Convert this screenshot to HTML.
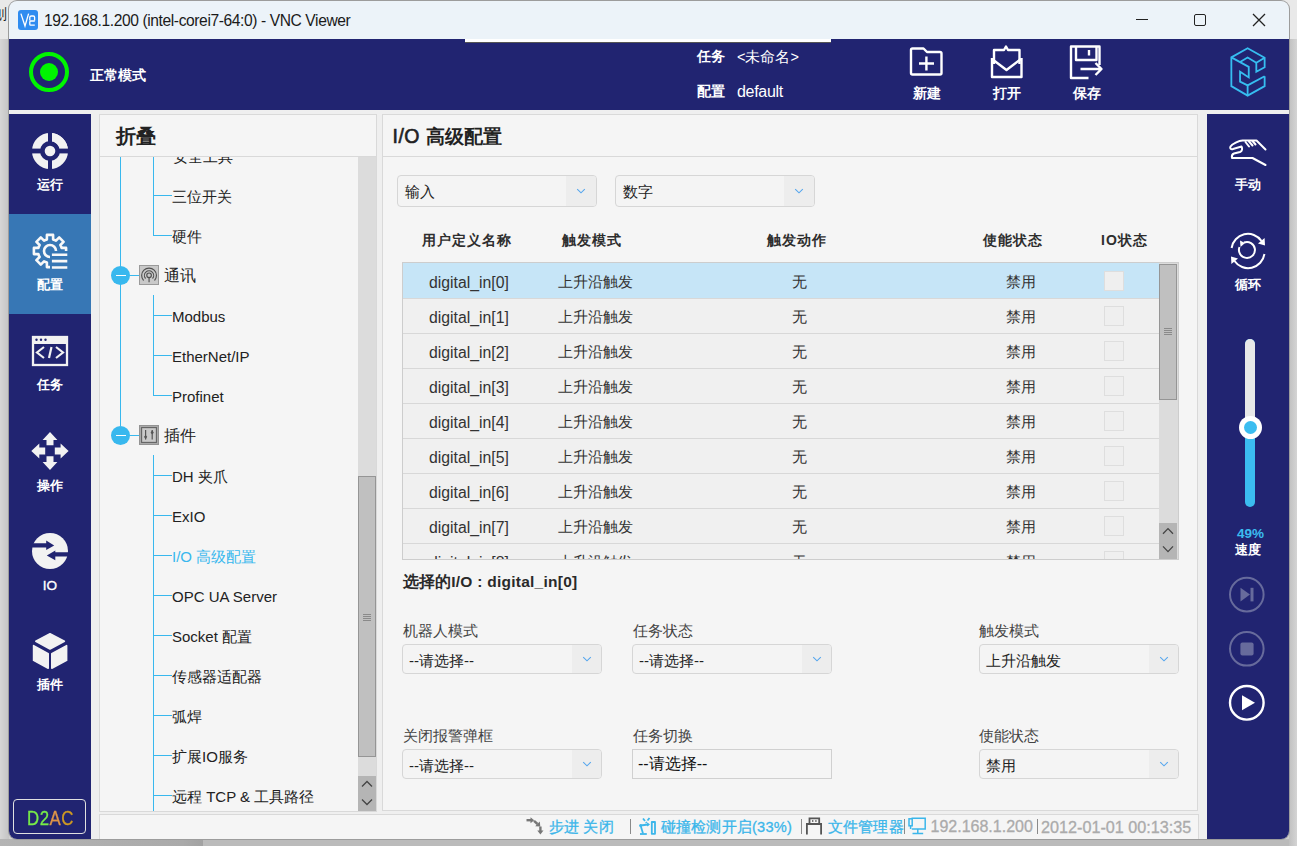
<!DOCTYPE html>
<html><head><meta charset="utf-8">
<style>
*{box-sizing:border-box}
html,body{margin:0;padding:0}
body{width:1297px;height:846px;overflow:hidden;position:relative;background:#cfcfcf;font-family:"Liberation Sans",sans-serif;color:#222}
.a{position:absolute}
.t{position:absolute;white-space:nowrap;line-height:1}
.navy{background:#212471}
.w{color:#fff}
.b{font-weight:bold}
</style></head><body>
<!-- desktop -->
<div class="a" style="left:0;top:0;width:1297px;height:39px;background:#e9e9e9"></div>
<div class="a" style="left:0;top:39px;width:9px;height:807px;background:linear-gradient(90deg,#d6d6d6,#c4c4c4)"></div>
<div class="a" style="left:0;top:839px;width:1297px;height:7px;background:#bbbbbb"></div>
<div class="a" style="left:0;top:839px;width:203px;height:7px;background:linear-gradient(90deg,#b4b4b4,#aaaaaa 90%,#a2a2a2)"></div>
<div class="a" style="left:1289px;top:39px;width:8px;height:807px;background:linear-gradient(90deg,#c0c0c0,#d4d4d4)"></div>
<div class="t" style="left:-8px;top:6px;font-size:15px;color:#222">刨</div>

<!-- window frame -->
<div class="a" style="left:8px;top:0px;width:1282px;height:840px;border-radius:9px;background:#9c9c9c"></div>
<!-- title bar -->
<div class="a" style="left:9px;top:1px;width:1280px;height:38px;background:#ecf3f9;border-radius:8px 8px 0 0"></div>
<svg class="a" style="left:18px;top:10px" width="20" height="20" viewBox="0 0 20 20"><rect x="0" y="0" width="20" height="20" rx="3" fill="#2f8cf0"/><g fill="none" stroke="#fff" stroke-width="1.3"><path d="M2.9 3.6 L7 16 L10.6 3.6"/><path d="M11.8 10.4 V7.2 Q11.8 6 13.3 6 H15.3 Q16.6 6 16.6 7.2 V10.4"/><path d="M16.8 11 H12.6 Q11.8 11 11.8 12 V14.2 Q11.8 15.1 12.6 15.1 H16.8"/></g></svg>
<div class="t" style="left:44px;top:12.5px;font-size:15.6px;letter-spacing:-0.4px;color:#1a1a1a">192.168.1.200 (intel-corei7-64:0) - VNC Viewer</div>
<div class="a" style="left:1136px;top:19px;width:12px;height:1px;background:#222"></div>
<div class="a" style="left:1194px;top:14px;width:12px;height:12px;border:1.2px solid #222;border-radius:2px"></div>
<svg class="a" style="left:1252px;top:13px" width="14" height="14" viewBox="0 0 14 14"><path d="M1 1L13 13M13 1L1 13" stroke="#222" stroke-width="1.3"/></svg>

<!-- main bg -->
<div class="a" style="left:9px;top:39px;width:1280px;height:800px;background:#efefef;border-radius:0 0 8px 8px"></div>
<!-- header -->
<div class="a navy" style="left:9px;top:39px;width:1280px;height:71px"></div>
<div class="a" style="left:465px;top:39px;width:366px;height:3px;background:#fff"></div>
<div class="a" style="left:465px;top:42px;width:366px;height:1px;background:#555"></div>
<div class="a" style="left:29px;top:52px;width:40px;height:40px;border:4px solid #00f500;border-radius:50%"></div>
<div class="a" style="left:40px;top:63px;width:18px;height:18px;background:#00f500;border-radius:50%"></div>
<div class="t w b" style="left:90px;top:68px;font-size:14px">正常模式</div>
<div class="t w b" style="left:697px;top:49px;font-size:14px">任务</div>
<div class="t w" style="left:737px;top:50px;font-size:14.5px">&lt;未命名&gt;</div>
<div class="t w b" style="left:697px;top:84px;font-size:14px">配置</div>
<div class="t w" style="left:737px;top:84px;font-size:16px;letter-spacing:-0.3px">default</div>

<!-- header icons -->
<svg class="a" style="left:900px;top:40px" width="210" height="65" viewBox="0 0 210 65">
 <g fill="none" stroke="#fff" stroke-width="2.4" stroke-linejoin="round">
  <path d="M12.5 8.5 H23.5 L27 12 H40 Q41.5 12 41.5 13.5 V33 Q41.5 34.5 40 34.5 H12.5 Q11 34.5 11 33 V10 Q11 8.5 12.5 8.5 Z"/>
  <path d="M26.4 16.5 V30.5 M19 23.5 H34"/>
  <path d="M92 18 V37 H121.5 V18"/>
  <path d="M92 19 L106.5 30 L121 19"/>
  <path d="M94 24 V10 L104 10 L106 6.5 L108 10 H119.5 V24"/>
  <path d="M102 50 Z"/>
  <path d="M1100 0"/>
  <path d="M188.5 38 H171 V6.5 H199.5 V25"/>
  <path d="M176 6.5 V20 H196.5 V6.5"/>
  <path d="M189 10 V15.5"/>
  <path d="M180.5 29 H201 M195.5 23 L201.5 29 L195.5 35"/>
 </g>
</svg>
<div class="t w b" style="left:912.5px;top:87px;font-size:13.5px">新建</div>
<div class="t w b" style="left:992.5px;top:87px;font-size:13.5px">打开</div>
<div class="t w b" style="left:1072.5px;top:87px;font-size:13.5px">保存</div>
<!-- logo -->
<svg class="a" style="left:1220px;top:40px" width="60" height="64" viewBox="0 0 793 846">
 <g fill="none" stroke="#36bdf0" stroke-width="24" stroke-linejoin="miter">
  <path d="M590,480 L590,610 L365,735 L150,610 L150,230 L365,110 L590,235 L590,360 L480,420 L480,300 L590,235"/>
  <path d="M150,230 L380,355 L380,495 L265,420 L265,550 L365,600 L590,480"/>
  <path d="M265,290 L365,232 L480,300"/>
  <path d="M365,600 L365,735"/>
 </g>
</svg>

<!-- left nav -->
<div class="a navy" style="left:9px;top:114px;width:82px;height:725px;border-radius:0 0 0 8px"></div>
<div class="a" style="left:9px;top:214px;width:82px;height:100px;background:#3777b5"></div>
<!-- 运行 -->
<svg class="a" style="left:30px;top:131px" width="40" height="40" viewBox="0 0 40 40">
 <g fill="#f2f2f2">
  <path d="M20 2 A18 18 0 0 1 38 20 L30 20 A10 10 0 0 0 20 10 Z" />
 </g>
 <circle cx="20" cy="20" r="14" fill="none" stroke="#f2f2f2" stroke-width="8"/>
 <rect x="18" y="0" width="4" height="40" fill="#212471"/>
 <rect x="0" y="17.6" width="40" height="4.8" fill="#212471"/>
 <circle cx="20" cy="20" r="5.3" fill="#f2f2f2"/>
</svg>
<div class="t w b" style="left:36.8px;top:178.0px;font-size:13.4px">运行</div>
<!-- 配置 gear -->
<svg class="a" style="left:30px;top:231px" width="40" height="40" viewBox="0 0 40 40">
 <defs><mask id="gm"><rect x="0" y="0" width="40" height="40" fill="#fff"/><rect x="20" y="20" width="20" height="20" fill="#000"/></mask></defs>
 <g fill="none" stroke="#f8f8f8" stroke-width="2.6" stroke-linejoin="round">
  <path mask="url(#gm)" d="M16.90 8.41 L16.90 3.90 L23.10 3.90 L23.10 8.41 A12.0 12.0 0 0 1 26.01 9.61 L29.19 6.42 L33.58 10.81 L30.39 13.99 A12.0 12.0 0 0 1 31.59 16.90 L36.10 16.90 L36.10 23.10 L31.59 23.10 A12.0 12.0 0 0 1 30.39 26.01 L33.58 29.19 L29.19 33.58 L26.01 30.39 A12.0 12.0 0 0 1 23.10 31.59 L23.10 36.10 L16.90 36.10 L16.90 31.59 A12.0 12.0 0 0 1 13.99 30.39 L10.81 33.58 L6.42 29.19 L9.61 26.01 A12.0 12.0 0 0 1 8.41 23.10 L3.90 23.10 L3.90 16.90 L8.41 16.90 A12.0 12.0 0 0 1 9.61 13.99 L6.42 10.81 L10.81 6.42 L13.99 9.61 A12.0 12.0 0 0 1 16.90 8.41 Z"/>
  <path d="M26 20 A6 6 0 1 0 20 26"/>
  <path d="M21.9 23.7 H37.3 M21.9 30.1 H37.3 M21.9 36.5 H37.3" stroke-linecap="butt"/>
 </g>
</svg>
<div class="t w b" style="left:36.8px;top:278.0px;font-size:13.4px">配置</div>
<!-- 任务 -->
<svg class="a" style="left:30px;top:334px" width="40" height="34" viewBox="0 0 40 34">
 <rect x="3" y="3" width="34" height="28" fill="none" stroke="#f2f2f2" stroke-width="2.3"/>
 <rect x="3" y="2" width="34" height="8" fill="#f2f2f2"/>
 <circle cx="6.5" cy="5.8" r="1.2" fill="#212471"/><circle cx="11" cy="5.8" r="1.2" fill="#212471"/><circle cx="15.5" cy="5.8" r="1.2" fill="#212471"/>
 <g fill="none" stroke="#f2f2f2" stroke-width="2.2">
  <path d="M14 13 L7 18.5 L14 24"/>
  <path d="M26 13 L33 18.5 L26 24"/>
  <path d="M21.5 13 L19 24"/>
 </g>
</svg>
<div class="t w b" style="left:36.8px;top:378.0px;font-size:13.4px">任务</div>
<!-- 操作 move -->
<svg class="a" style="left:30px;top:431px" width="40" height="40" viewBox="0 0 40 40">
 <g fill="#f2f2f2">
  <path d="M20 1 L27.4 9 H23.5 V14.3 H16.5 V9 H12.6 Z"/>
  <path d="M20 39 L27.4 31 H23.5 V25.2 H16.5 V31 H12.6 Z"/>
  <path d="M1.3 20 L9.3 12.6 V16.5 H15.2 V23.5 H9.3 V27.4 Z"/>
  <path d="M38.6 20 L30.6 12.6 V16.5 H24.8 V23.5 H30.6 V27.4 Z"/>
 </g>
</svg>
<div class="t w b" style="left:36.8px;top:479.0px;font-size:13.4px">操作</div>
<!-- IO -->
<svg class="a" style="left:30px;top:531px" width="40" height="40" viewBox="0 0 40 40">
 <circle cx="20" cy="20" r="18" fill="#f2f2f2"/>
 <g fill="#212471">
  <path d="M0 12.2 H16.2 V9.5 L24.2 14.5 L16.2 19.1 V16.4 H0 Z"/>
  <path d="M40 21.2 H25.3 V19.6 L16.8 24.4 L25.3 29.2 V25.5 H40 Z"/>
 </g>
</svg>
<div class="t w" style="left:42.8px;top:579px;font-size:13.6px;-webkit-text-stroke:0.35px #fff">IO</div>
<!-- 插件 cube -->
<svg class="a" style="left:30px;top:631px" width="40" height="40" viewBox="0 0 40 40">
 <g fill="#f2f2f2" stroke="#f2f2f2" stroke-width="1.6" stroke-linejoin="round">
  <path d="M20 2.8 L34.4 10.2 L20 18 L5.8 10.2 Z"/>
  <path d="M3.6 14.6 L18.2 22.8 L18.2 37.2 L3.6 29.4 Z"/>
  <path d="M21.8 22.8 L36.6 14.6 L36.6 29.4 L21.8 37.2 Z"/>
 </g>
</svg>
<div class="t w b" style="left:36.8px;top:678.0px;font-size:13.4px">插件</div>
<!-- D2AC -->
<div class="a" style="left:13px;top:799px;width:73px;height:35px;border:1.5px solid #e0e0e0;border-radius:4px"></div>
<div class="t" style="left:27px;top:808px;font-size:20px;letter-spacing:0.6px;transform:scaleX(0.84);transform-origin:0 0;-webkit-text-stroke:0.3px currentColor"><span style="color:#78ec48">D2</span><span style="color:#de9448">A</span><span style="color:#cf9a22">C</span></div>


<!-- tree panel -->
<div class="a" style="left:99px;top:114px;width:278px;height:698px;background:#f5f5f5;border:1px solid #d9d9d9"></div>
<div class="a" style="left:100px;top:156px;width:276px;height:1px;background:#d9d9d9"></div>
<div class="t b" style="left:116px;top:126px;font-size:20px;color:#222">折叠</div>
<div class="a" style="left:100px;top:157px;width:258px;height:654px;overflow:hidden">
 <div class="a" style="left:20px;top:0;width:1.2px;height:269px;background:#38b8ee"></div>
 <div class="a" style="left:53px;top:0;width:1px;height:79px;background:#38b8ee"></div>
 <div class="t" style="left:73px;top:-8px;font-size:15px">安全工具</div>
 <div class="a" style="left:53px;top:38px;width:19px;height:1px;background:#38b8ee"></div>
 <div class="t" style="left:72px;top:32px;font-size:15px;color:#222">三位开关</div>
 <div class="a" style="left:53px;top:78px;width:19px;height:1px;background:#38b8ee"></div>
 <div class="t" style="left:72px;top:72px;font-size:15px;color:#222">硬件</div>
 <div class="a" style="left:11px;top:109px;width:19px;height:19px;border-radius:50%;background:#38b8ee"></div>
 <div class="a" style="left:15.5px;top:117.5px;width:10px;height:1.5px;background:#fff"></div>
 <div class="a" style="left:30px;top:118px;width:9px;height:1px;background:#38b8ee"></div>
 <div class="a" style="left:39px;top:108px;width:20px;height:20px;border:1px solid transparent"><svg width="20" height="20" viewBox="0 0 20 20" style="position:absolute;left:-1px;top:-1px"><rect x="0.5" y="0.5" width="19" height="19" fill="#c9c9c9" stroke="#9a9a9a"/><g fill="none" stroke="#505050" stroke-width="1.15"><path d="M4.6 15.5 A7.4 7.4 0 1 1 15.5 15.5"/><path d="M6.6 13.5 A4.6 4.6 0 1 1 13.5 13.5"/><circle cx="10.07" cy="10.25" r="2.3"/><path d="M10.07 12.55 V17.2"/></g></svg></div>
 <div class="t" style="left:64px;top:111px;font-size:16px">通讯</div>
 <div class="a" style="left:53px;top:138px;width:1px;height:100px;background:#38b8ee"></div>
 <div class="a" style="left:53px;top:158px;width:19px;height:1px;background:#38b8ee"></div>
 <div class="t" style="left:72px;top:152px;font-size:15px;color:#222">Modbus</div>
 <div class="a" style="left:53px;top:198px;width:19px;height:1px;background:#38b8ee"></div>
 <div class="t" style="left:72px;top:192px;font-size:15px;color:#222">EtherNet/IP</div>
 <div class="a" style="left:53px;top:238px;width:19px;height:1px;background:#38b8ee"></div>
 <div class="t" style="left:72px;top:232px;font-size:15px;color:#222">Profinet</div>
 <div class="a" style="left:11px;top:269px;width:19px;height:19px;border-radius:50%;background:#38b8ee"></div>
 <div class="a" style="left:15.5px;top:277.5px;width:10px;height:1.5px;background:#fff"></div>
 <div class="a" style="left:30px;top:278px;width:9px;height:1px;background:#38b8ee"></div>
 <div class="a" style="left:39px;top:268px;width:20px;height:20px;border:1px solid transparent"><svg width="20" height="20" viewBox="0 0 20 20" style="position:absolute;left:-1px;top:-1px"><rect x="0.5" y="0.5" width="19" height="19" fill="#a9a9a9" stroke="#939393"/><rect x="2.6" y="2.6" width="14.8" height="14.8" fill="#c9c9c9" stroke="#626262" stroke-width="1.1"/><g stroke="#555" stroke-width="1.2"><path d="M6.6 4.9 V14.5"/><path d="M13.2 4.9 V14.5"/></g><g fill="#555"><path d="M6.6 10 L8.2 11.8 L6.6 14.6 L5 11.8Z"/><path d="M13.2 5 L14.8 7.8 L13.2 9.6 L11.6 7.8Z"/></g></svg></div>
 <div class="t" style="left:64px;top:271px;font-size:16px">插件</div>
 <div class="a" style="left:53px;top:298px;width:1px;height:700px;background:#38b8ee"></div>
 <div class="a" style="left:53px;top:318px;width:19px;height:1px;background:#38b8ee"></div>
 <div class="t" style="left:72px;top:312px;font-size:15px;color:#222">DH 夹爪</div>
 <div class="a" style="left:53px;top:358px;width:19px;height:1px;background:#38b8ee"></div>
 <div class="t" style="left:72px;top:352px;font-size:15px;color:#222">ExIO</div>
 <div class="a" style="left:53px;top:398px;width:19px;height:1px;background:#38b8ee"></div>
 <div class="t" style="left:72px;top:392px;font-size:15px;color:#38b8ee">I/O 高级配置</div>
 <div class="a" style="left:53px;top:438px;width:19px;height:1px;background:#38b8ee"></div>
 <div class="t" style="left:72px;top:432px;font-size:15px;color:#222">OPC UA Server</div>
 <div class="a" style="left:53px;top:478px;width:19px;height:1px;background:#38b8ee"></div>
 <div class="t" style="left:72px;top:472px;font-size:15px;color:#222">Socket 配置</div>
 <div class="a" style="left:53px;top:518px;width:19px;height:1px;background:#38b8ee"></div>
 <div class="t" style="left:72px;top:512px;font-size:15px;color:#222">传感器适配器</div>
 <div class="a" style="left:53px;top:558px;width:19px;height:1px;background:#38b8ee"></div>
 <div class="t" style="left:72px;top:552px;font-size:15px;color:#222">弧焊</div>
 <div class="a" style="left:53px;top:598px;width:19px;height:1px;background:#38b8ee"></div>
 <div class="t" style="left:72px;top:592px;font-size:15px;color:#222">扩展IO服务</div>
 <div class="a" style="left:53px;top:638px;width:19px;height:1px;background:#38b8ee"></div>
 <div class="t" style="left:72px;top:632px;font-size:15px;color:#222">远程 TCP &amp; 工具路径</div>
 </div>
 <!-- tree scrollbar -->
 <div class="a" style="left:358px;top:157px;width:18px;height:619px;background:#dcdcdc"></div>
 <div class="a" style="left:358px;top:476px;width:18px;height:281px;background:#c0c0c0;border:1px solid #959595"></div>
 <div class="a" style="left:363px;top:614px;width:8px;height:7px;background:repeating-linear-gradient(180deg,#8a8a8a 0 1px,transparent 1px 2px)"></div>
 <div class="a" style="left:358px;top:776px;width:18px;height:35px;background:#b5b5b5"></div>
 <svg class="a" style="left:358px;top:776px" width="18" height="35" viewBox="0 0 18 35"><g fill="none" stroke="#444" stroke-width="1.3"><path d="M4 10.5 L9 5.5 L14 10.5"/><path d="M4 23.5 L9 28.5 L14 23.5"/></g></svg>


<!-- content panel -->
<div class="a" style="left:382px;top:114px;width:816px;height:697px;background:#f5f5f5;border:1px solid #d9d9d9"></div>
<div class="a" style="left:383px;top:156px;width:814px;height:1px;background:#d9d9d9"></div>
<div class="t" style="left:392.5px;top:127.2px;font-size:19.5px;letter-spacing:0.5px;color:#222;-webkit-text-stroke:0.6px #222">I/O</div><div class="t b" style="left:426px;top:127.5px;font-size:18.5px;color:#222">高级配置</div>
<div class="a" style="left:397px;top:175px;width:200px;height:32px;border:1px solid #d6d6d6;border-radius:4px;background:#f4f4f4;overflow:hidden"><div class="a" style="right:0;top:0;width:30px;height:100%;background:#ededed"></div></div>
<svg class="a" style="left:576.0px;top:188.0px" width="10" height="6" viewBox="0 0 10 6"><path d="M1.2 1.2 L5 4.8 L8.8 1.2" fill="none" stroke="#55a6ee" stroke-width="1.1"/></svg>
<div class="t" style="left:404.5px;top:184px;font-size:15px;color:#222">输入</div>
<div class="a" style="left:615px;top:175px;width:200px;height:32px;border:1px solid #d6d6d6;border-radius:4px;background:#f4f4f4;overflow:hidden"><div class="a" style="right:0;top:0;width:30px;height:100%;background:#ededed"></div></div>
<svg class="a" style="left:794.0px;top:188.0px" width="10" height="6" viewBox="0 0 10 6"><path d="M1.2 1.2 L5 4.8 L8.8 1.2" fill="none" stroke="#55a6ee" stroke-width="1.1"/></svg>
<div class="t" style="left:622.5px;top:184px;font-size:15px;color:#222">数字</div>
<div class="t b" style="left:421.9px;top:232.5px;font-size:14px;letter-spacing:1px;color:#2e2e2e">用户定义名称</div>
<div class="t b" style="left:561.8px;top:232.5px;font-size:14px;letter-spacing:1px;color:#2e2e2e">触发模式</div>
<div class="t b" style="left:766.8px;top:232.5px;font-size:14px;letter-spacing:1px;color:#2e2e2e">触发动作</div>
<div class="t b" style="left:983.0px;top:232.5px;font-size:14px;letter-spacing:1px;color:#2e2e2e">使能状态</div>
<div class="t b" style="left:1101.1px;top:232.5px;font-size:14px;letter-spacing:1px;color:#2e2e2e">IO状态</div>
<div class="a" style="left:402px;top:262px;width:777px;height:298px;border:1px solid #cdcdcd;background:#f0f0f0;overflow:hidden">
 <div class="a" style="left:0;top:0;width:756px;height:35px;background:#c6e5f7"></div>
 <div class="a" style="left:0;top:35px;width:756px;height:1px;background:#d8d8d8"></div>
 <div class="a" style="left:0;top:70px;width:756px;height:1px;background:#d8d8d8"></div>
 <div class="a" style="left:0;top:105px;width:756px;height:1px;background:#d8d8d8"></div>
 <div class="a" style="left:0;top:140px;width:756px;height:1px;background:#d8d8d8"></div>
 <div class="a" style="left:0;top:175px;width:756px;height:1px;background:#d8d8d8"></div>
 <div class="a" style="left:0;top:210px;width:756px;height:1px;background:#d8d8d8"></div>
 <div class="a" style="left:0;top:245px;width:756px;height:1px;background:#d8d8d8"></div>
 <div class="a" style="left:0;top:280px;width:756px;height:1px;background:#d8d8d8"></div>
 <div class="t" style="left:26px;top:12px;font-size:15.8px;color:#333">digital_in[0]</div>
 <div class="t" style="left:155px;top:11px;font-size:15px;color:#333">上升沿触发</div>
 <div class="t" style="left:389px;top:11px;font-size:15px;color:#333">无</div>
 <div class="t" style="left:603px;top:11px;font-size:15px;color:#333">禁用</div>
 <div class="a" style="left:701px;top:8px;width:20px;height:20px;background:#efefef;border:1px solid #dedede"></div>
 <div class="t" style="left:26px;top:47px;font-size:15.8px;color:#333">digital_in[1]</div>
 <div class="t" style="left:155px;top:46px;font-size:15px;color:#333">上升沿触发</div>
 <div class="t" style="left:389px;top:46px;font-size:15px;color:#333">无</div>
 <div class="t" style="left:603px;top:46px;font-size:15px;color:#333">禁用</div>
 <div class="a" style="left:701px;top:43px;width:20px;height:20px;background:#efefef;border:1px solid #dedede"></div>
 <div class="t" style="left:26px;top:82px;font-size:15.8px;color:#333">digital_in[2]</div>
 <div class="t" style="left:155px;top:81px;font-size:15px;color:#333">上升沿触发</div>
 <div class="t" style="left:389px;top:81px;font-size:15px;color:#333">无</div>
 <div class="t" style="left:603px;top:81px;font-size:15px;color:#333">禁用</div>
 <div class="a" style="left:701px;top:78px;width:20px;height:20px;background:#efefef;border:1px solid #dedede"></div>
 <div class="t" style="left:26px;top:117px;font-size:15.8px;color:#333">digital_in[3]</div>
 <div class="t" style="left:155px;top:116px;font-size:15px;color:#333">上升沿触发</div>
 <div class="t" style="left:389px;top:116px;font-size:15px;color:#333">无</div>
 <div class="t" style="left:603px;top:116px;font-size:15px;color:#333">禁用</div>
 <div class="a" style="left:701px;top:113px;width:20px;height:20px;background:#efefef;border:1px solid #dedede"></div>
 <div class="t" style="left:26px;top:152px;font-size:15.8px;color:#333">digital_in[4]</div>
 <div class="t" style="left:155px;top:151px;font-size:15px;color:#333">上升沿触发</div>
 <div class="t" style="left:389px;top:151px;font-size:15px;color:#333">无</div>
 <div class="t" style="left:603px;top:151px;font-size:15px;color:#333">禁用</div>
 <div class="a" style="left:701px;top:148px;width:20px;height:20px;background:#efefef;border:1px solid #dedede"></div>
 <div class="t" style="left:26px;top:187px;font-size:15.8px;color:#333">digital_in[5]</div>
 <div class="t" style="left:155px;top:186px;font-size:15px;color:#333">上升沿触发</div>
 <div class="t" style="left:389px;top:186px;font-size:15px;color:#333">无</div>
 <div class="t" style="left:603px;top:186px;font-size:15px;color:#333">禁用</div>
 <div class="a" style="left:701px;top:183px;width:20px;height:20px;background:#efefef;border:1px solid #dedede"></div>
 <div class="t" style="left:26px;top:222px;font-size:15.8px;color:#333">digital_in[6]</div>
 <div class="t" style="left:155px;top:221px;font-size:15px;color:#333">上升沿触发</div>
 <div class="t" style="left:389px;top:221px;font-size:15px;color:#333">无</div>
 <div class="t" style="left:603px;top:221px;font-size:15px;color:#333">禁用</div>
 <div class="a" style="left:701px;top:218px;width:20px;height:20px;background:#efefef;border:1px solid #dedede"></div>
 <div class="t" style="left:26px;top:257px;font-size:15.8px;color:#333">digital_in[7]</div>
 <div class="t" style="left:155px;top:256px;font-size:15px;color:#333">上升沿触发</div>
 <div class="t" style="left:389px;top:256px;font-size:15px;color:#333">无</div>
 <div class="t" style="left:603px;top:256px;font-size:15px;color:#333">禁用</div>
 <div class="a" style="left:701px;top:253px;width:20px;height:20px;background:#efefef;border:1px solid #dedede"></div>
 <div class="t" style="left:26px;top:292px;font-size:15.8px;color:#333">digital_in[8]</div>
 <div class="t" style="left:155px;top:291px;font-size:15px;color:#333">上升沿触发</div>
 <div class="t" style="left:389px;top:291px;font-size:15px;color:#333">无</div>
 <div class="t" style="left:603px;top:291px;font-size:15px;color:#333">禁用</div>
 <div class="a" style="left:701px;top:288px;width:20px;height:20px;background:#efefef;border:1px solid #dedede"></div>
 <div class="a" style="left:756px;top:0;width:19px;height:296px;background:#dcdcdc"></div>
 <div class="a" style="left:756px;top:1px;width:18px;height:136px;background:#c0c0c0;border:1px solid #959595"></div>
 <div class="a" style="left:761px;top:65px;width:8px;height:7px;background:repeating-linear-gradient(180deg,#8a8a8a 0 1px,transparent 1px 2px)"></div>
 <div class="a" style="left:756px;top:260px;width:18px;height:36px;background:#b5b5b5"></div>
 <svg class="a" style="left:756px;top:260px" width="18" height="36" viewBox="0 0 18 36"><g fill="none" stroke="#444" stroke-width="1.3"><path d="M4 10.8 L9 5.6 L14 10.8"/><path d="M4 23.4 L9 28.6 L14 23.4"/></g></svg>
</div>
<div class="t b" style="left:402.5px;top:573.5px;font-size:15.5px;letter-spacing:0.25px;color:#2a2a2a">选择的I/O : digital_in[0]</div>
<div class="t" style="left:402.5px;top:623px;font-size:15px;color:#444">机器人模式</div>
<div class="t" style="left:632.5px;top:623px;font-size:15px;color:#444">任务状态</div>
<div class="t" style="left:979px;top:623px;font-size:15px;color:#444">触发模式</div>
<div class="t" style="left:402.5px;top:728px;font-size:15px;color:#444">关闭报警弹框</div>
<div class="t" style="left:632.5px;top:728px;font-size:15px;color:#444">任务切换</div>
<div class="t" style="left:979px;top:728px;font-size:15px;color:#444">使能状态</div>
<div class="a" style="left:402px;top:644px;width:200px;height:30px;border:1px solid #d6d6d6;border-radius:4px;background:#f4f4f4;overflow:hidden"><div class="a" style="right:0;top:0;width:29px;height:100%;background:#ededed"></div></div>
<svg class="a" style="left:581.5px;top:656.0px" width="10" height="6" viewBox="0 0 10 6"><path d="M1.2 1.2 L5 4.8 L8.8 1.2" fill="none" stroke="#55a6ee" stroke-width="1.1"/></svg>
<div class="t" style="left:409px;top:652.5px;font-size:15px;color:#222">--请选择--</div>
<div class="a" style="left:632px;top:644px;width:200px;height:30px;border:1px solid #d6d6d6;border-radius:4px;background:#f4f4f4;overflow:hidden"><div class="a" style="right:0;top:0;width:29px;height:100%;background:#ededed"></div></div>
<svg class="a" style="left:811.5px;top:656.0px" width="10" height="6" viewBox="0 0 10 6"><path d="M1.2 1.2 L5 4.8 L8.8 1.2" fill="none" stroke="#55a6ee" stroke-width="1.1"/></svg>
<div class="t" style="left:639px;top:652.5px;font-size:15px;color:#222">--请选择--</div>
<div class="a" style="left:979px;top:644px;width:200px;height:30px;border:1px solid #d6d6d6;border-radius:4px;background:#f4f4f4;overflow:hidden"><div class="a" style="right:0;top:0;width:29px;height:100%;background:#ededed"></div></div>
<svg class="a" style="left:1158.5px;top:656.0px" width="10" height="6" viewBox="0 0 10 6"><path d="M1.2 1.2 L5 4.8 L8.8 1.2" fill="none" stroke="#55a6ee" stroke-width="1.1"/></svg>
<div class="t" style="left:986px;top:652.5px;font-size:15px;color:#222">上升沿触发</div>
<div class="a" style="left:402px;top:749px;width:200px;height:30px;border:1px solid #d6d6d6;border-radius:4px;background:#f4f4f4;overflow:hidden"><div class="a" style="right:0;top:0;width:29px;height:100%;background:#ededed"></div></div>
<svg class="a" style="left:581.5px;top:761.0px" width="10" height="6" viewBox="0 0 10 6"><path d="M1.2 1.2 L5 4.8 L8.8 1.2" fill="none" stroke="#55a6ee" stroke-width="1.1"/></svg>
<div class="t" style="left:409px;top:757.5px;font-size:15px;color:#222">--请选择--</div>
<div class="a" style="left:979px;top:749px;width:200px;height:30px;border:1px solid #d6d6d6;border-radius:4px;background:#f4f4f4;overflow:hidden"><div class="a" style="right:0;top:0;width:29px;height:100%;background:#ededed"></div></div>
<svg class="a" style="left:1158.5px;top:761.0px" width="10" height="6" viewBox="0 0 10 6"><path d="M1.2 1.2 L5 4.8 L8.8 1.2" fill="none" stroke="#55a6ee" stroke-width="1.1"/></svg>
<div class="t" style="left:986px;top:757.5px;font-size:15px;color:#222">禁用</div>
<div class="a" style="left:632px;top:749px;width:200px;height:30px;border:1px solid #d0d0d0;background:#f5f5f5"></div>
<div class="t" style="left:638px;top:756px;font-size:16px;color:#111">--请选择--</div>

<!-- status bar -->
<div class="a" style="left:99px;top:814px;width:1100px;height:25px;background:#f5f5f5;border:1px solid #d9d9d9;border-bottom:none"></div>
<div class="t" style="left:548.5px;top:819.5px;font-size:14.5px;letter-spacing:0.3px;color:#3bb6ea;-webkit-text-stroke:0.3px #3bb6ea">步进 关闭</div>
<div class="a" style="left:630px;top:818.5px;width:1px;height:15px;background:#8a8a8a"></div>
<div class="t" style="left:660.5px;top:819.5px;font-size:14.6px;letter-spacing:0.25px;color:#3bb6ea;-webkit-text-stroke:0.3px #3bb6ea">碰撞检测开启(33%)</div>
<div class="a" style="left:801px;top:818.5px;width:1px;height:15px;background:#8a8a8a"></div>
<div class="t" style="left:827.5px;top:819.5px;font-size:14.5px;letter-spacing:0.3px;color:#3bb6ea;-webkit-text-stroke:0.3px #3bb6ea">文件管理器</div>
<div class="a" style="left:904px;top:818.5px;width:1px;height:15px;background:#8a8a8a"></div>
<div class="t" style="left:930.5px;top:818.5px;font-size:16px;color:#ababab;-webkit-text-stroke:0.3px #ababab">192.168.1.200</div>
<div class="a" style="left:1037px;top:818.5px;width:1px;height:15px;background:#8a8a8a"></div>
<div class="t" style="left:1041px;top:818.5px;font-size:16.2px;color:#ababab;-webkit-text-stroke:0.3px #ababab">2012-01-01 00:13:35</div>

<!-- right nav -->
<div class="a navy" style="left:1207px;top:114px;width:82px;height:725px;border-radius:0 0 8px 0"></div>

<!-- right nav content -->
<svg class="a" style="left:1227px;top:136px" width="42" height="32" viewBox="0 0 42 32">
 <g fill="none" stroke="#fff" stroke-width="2" stroke-linecap="round" stroke-linejoin="round">
  <path d="M38.5 13.5 L29.5 4.5 L15.5 4.5 C12 4.5 5 8 3.5 10.5 C2.5 12.5 4 13.5 6 13 L14.5 10.5 C15.5 12.5 15.5 15 13 16 L7 17.5 C5 18.2 4.5 19.5 5 22 L25.5 22 L38.5 29"/>
  <path d="M18.5 6 L22 10.5 M22 5.5 L25.5 9.5 M25.5 5 L28.5 8.5"/>
 </g>
</svg>
<div class="t w b" style="left:1235px;top:177.5px;font-size:13.4px">手动</div>
<svg class="a" style="left:1228px;top:231px" width="40" height="40" viewBox="0 0 40 40">
 <g fill="none" stroke="#fff" stroke-width="2">
  <path d="M3.6 17 A16.5 16.5 0 0 1 33.5 10"/>
  <path d="M36.4 23 A16.5 16.5 0 0 1 6.5 30"/>
  <path d="M11.5 16 A8 8 0 1 0 16 11.5"/>
 </g>
 <g fill="#fff">
  <path d="M36.6 7 L37 14.5 L30 12.5 Z"/>
  <path d="M3.4 33 L3 25.5 L10 27.5 Z"/>
  <path d="M12 9.5 L17 12 L12.5 16 Z"/>
 </g>
</svg>
<div class="t w b" style="left:1235px;top:277.5px;font-size:13.4px">循环</div>
<div class="a" style="left:1245px;top:339px;width:10px;height:168px;border-radius:5px;background:#3bbdf0"></div>
<div class="a" style="left:1245px;top:339px;width:10px;height:90px;border-radius:5px 5px 0 0;background:#e8e8e8"></div>
<div class="a" style="left:1238.5px;top:416.3px;width:23px;height:23px;border-radius:50%;background:#fff"></div>
<div class="a" style="left:1243.5px;top:421.3px;width:13px;height:13px;border-radius:50%;background:#3bbdf0"></div>
<div class="t b" style="left:1237px;top:527px;font-size:13.5px;color:#3bbdf0">49%</div>
<div class="t w b" style="left:1234.5px;top:542.5px;font-size:13.4px">速度</div>
<svg class="a" style="left:1227px;top:575px" width="40" height="150" viewBox="0 0 40 150">
 <g fill="none" stroke-width="2">
  <circle cx="19.8" cy="19.6" r="16.8" stroke="#676b9c"/>
  <circle cx="19.8" cy="73.8" r="16.8" stroke="#676b9c"/>
  <circle cx="19.8" cy="127.8" r="16.8" stroke="#fff" stroke-width="2.4"/>
 </g>
 <g fill="#676b9c">
  <path d="M13.5 12.8 L23 19.6 L13.5 26.4 Z"/>
  <rect x="23.5" y="12.8" width="3" height="13.6"/>
  <rect x="13.4" y="67.4" width="13.2" height="13.2" rx="2"/>
 </g>
 <path d="M15 120.2 L28 127.8 L15 135.2 Z" fill="#fff"/>
</svg>

<!-- status icons -->
<svg class="a" style="left:524px;top:816px" width="20" height="20" viewBox="0 0 20 20"><g fill="none" stroke="#777" stroke-width="2.4"><path d="M2.5 4.2 H7"/><path d="M10 4.8 L13.5 8"/><path d="M16.4 10.5 V15"/></g><g fill="#777"><path d="M6.5 1.2 L10.2 4.2 L6.5 7.2Z"/><path d="M11.2 10.3 L16.3 10.5 L15.8 5.5Z"/><path d="M13.3 14.5 H19.5 L16.4 18.5Z"/></g></svg>
<svg class="a" style="left:637px;top:816px" width="21" height="20" viewBox="0 0 21 20"><g fill="none" stroke="#3bb6ea" stroke-width="1.8" stroke-linejoin="round"><path d="M3 18 H9.8"/><path d="M6 17.5 L3.6 9.5 L11 8.5"/><rect x="14.8" y="6" width="3.2" height="11.8"/><path d="M6 2.5 L8 5 M12.5 2 L10.5 4.5 M9 6 L9.5 7"/></g><circle cx="3.6" cy="9.5" r="1.5" fill="#3bb6ea"/><path d="M10.5 6.5 L13 8.5 L10.5 10.5 L9.5 8.5Z" fill="#3bb6ea"/></svg>
<svg class="a" style="left:805px;top:816px" width="18" height="20" viewBox="0 0 18 20"><g fill="none" stroke="#555" stroke-width="1.8"><path d="M1.9 18.5 V8 H16.1 V18.5"/><path d="M4.5 8 V2.3 H14.2 V8"/></g><g fill="#555"><rect x="7" y="4.2" width="1.4" height="1.6"/><rect x="10.2" y="4.2" width="1.4" height="1.6"/></g></svg>
<svg class="a" style="left:908px;top:817px" width="19" height="18" viewBox="0 0 19 18"><g fill="none" stroke="#3bb6ea" stroke-width="1.5"><path d="M3.5 1.3 H17.2 V12 H3.8"/><path d="M9.8 12 V16.3 M4.5 16.4 H15.2"/><rect x="1" y="1.8" width="3.2" height="7"/><path d="M2.6 8.8 V12"/></g></svg>
</body></html>
